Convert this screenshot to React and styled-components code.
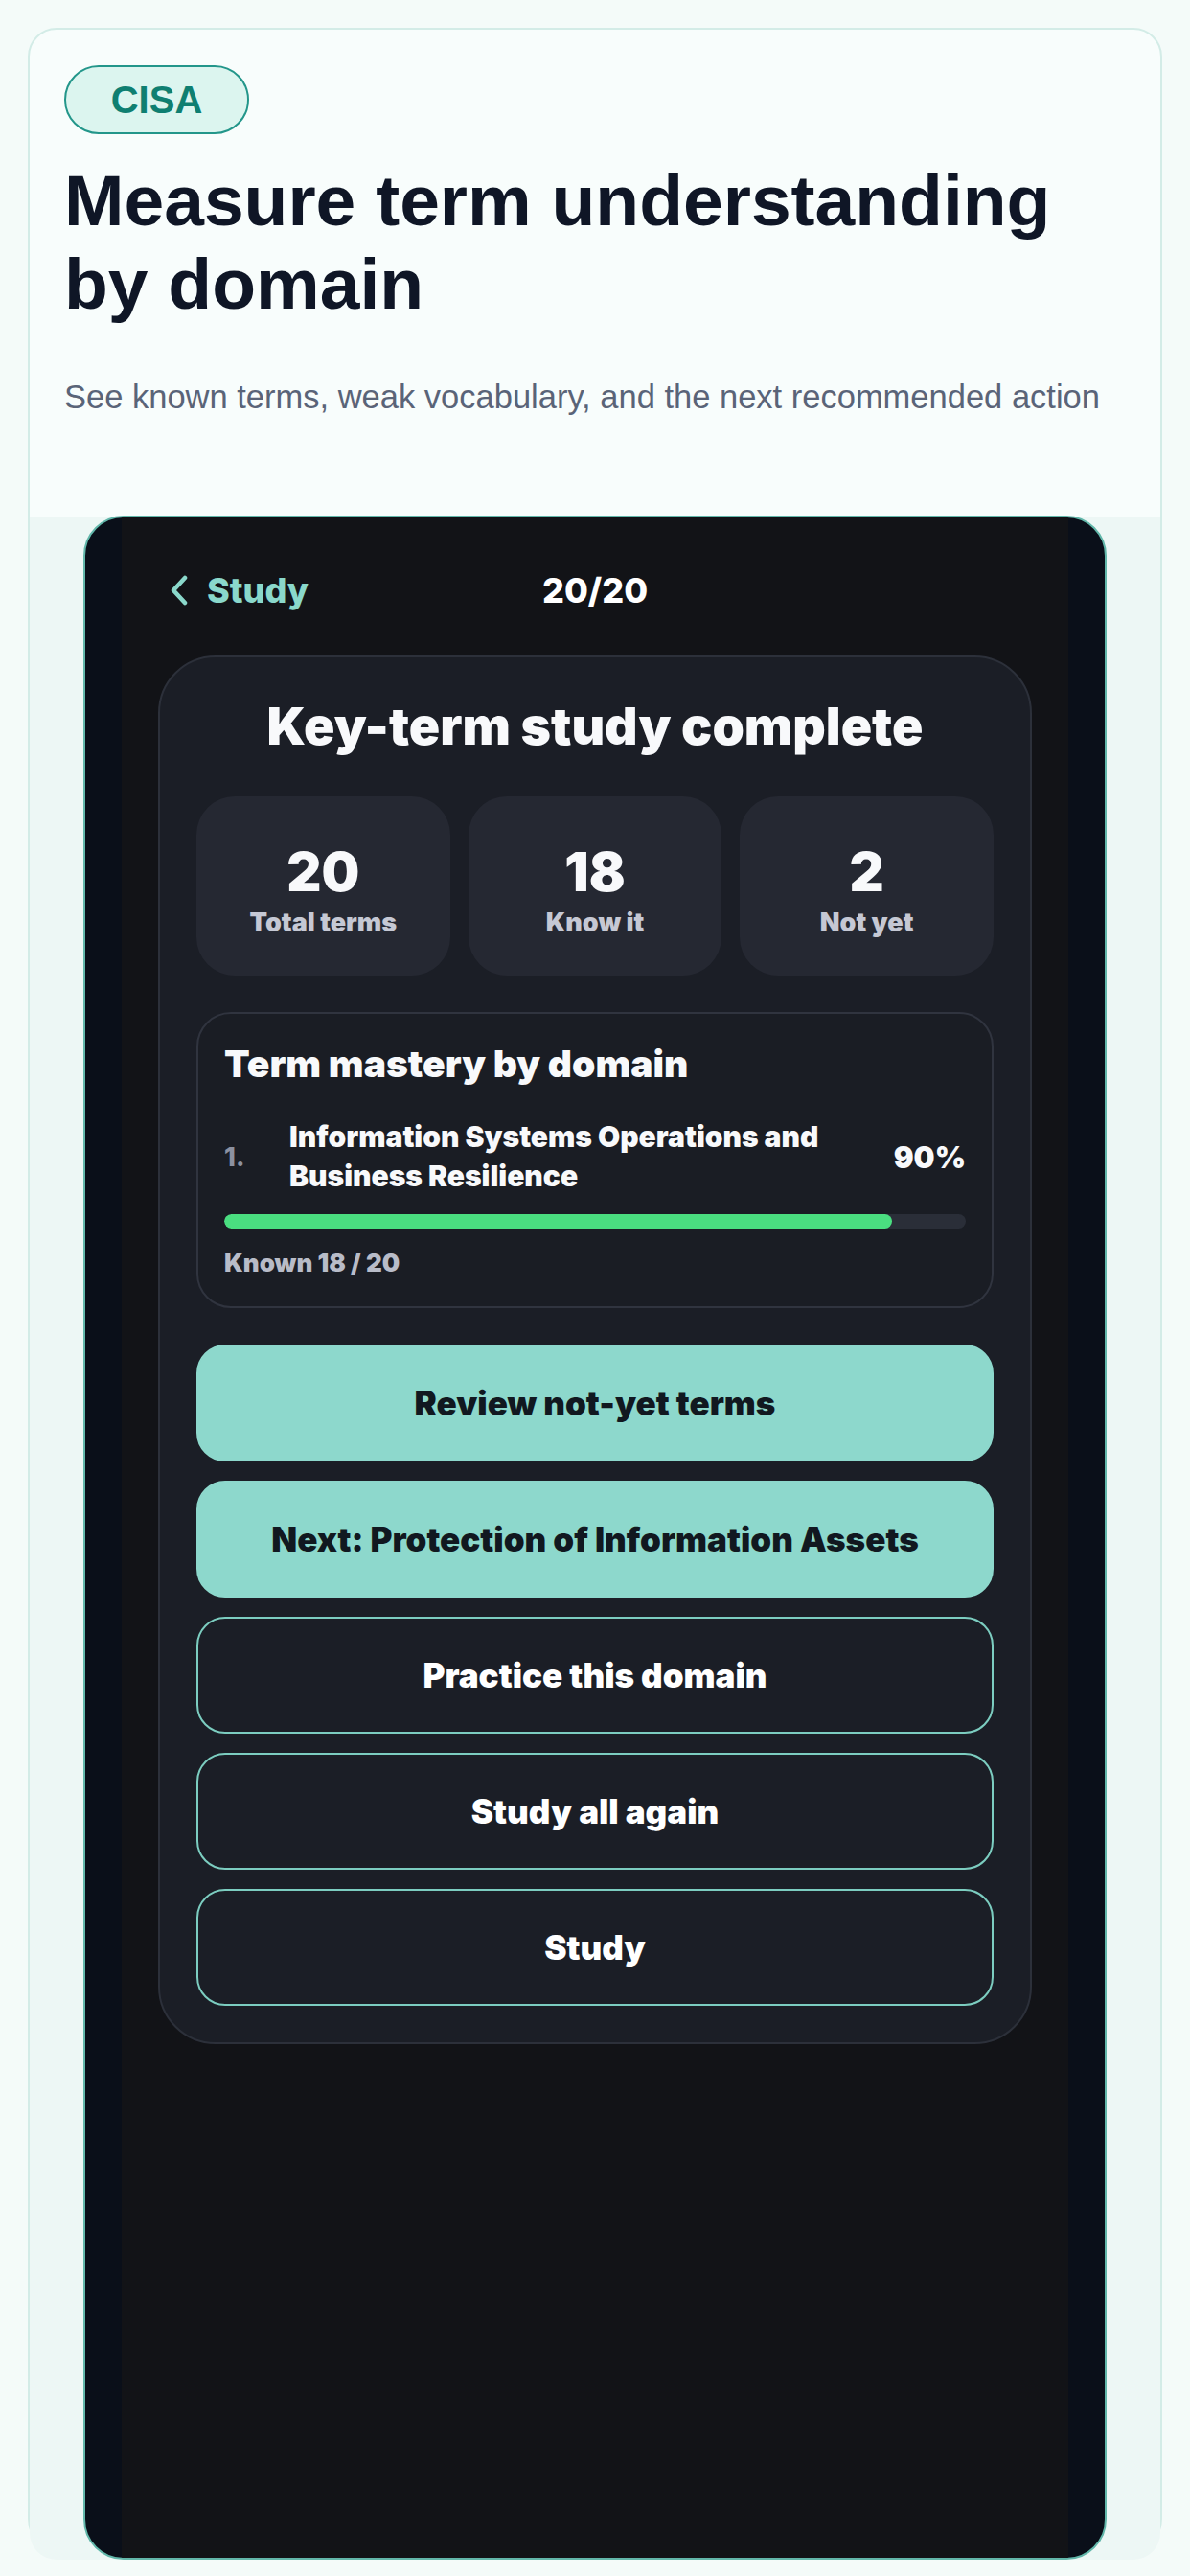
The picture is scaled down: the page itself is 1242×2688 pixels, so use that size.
import React from 'react';
import styled, { createGlobalStyle } from 'styled-components';

const GlobalStyle = createGlobalStyle`
  * {
    box-sizing: border-box;
  }

  body {
    margin: 0;
    background: #f4fbf9;
    font-family: 'Liberation Sans', Arial, sans-serif;
  }
`;

const stats = [
  { value: '20', label: 'Total terms' },
  { value: '18', label: 'Know it' },
  { value: '2', label: 'Not yet' },
];

const actions = [
  { label: 'Review not-yet terms', primary: true },
  { label: 'Next: Protection of Information Assets', primary: true },
  { label: 'Practice this domain' },
  { label: 'Study all again' },
  { label: 'Study' },
];

const App = () => {
  const known = 18;
  const total = 20;
  const percent = Math.round((known / total) * 100);

  return (
    <Page>
      <GlobalStyle />
      <Frame>
        <Intro>
          <Badge>CISA</Badge>
          <Headline>Measure term understanding by domain</Headline>
          <Lead>See known terms, weak vocabulary, and the next recommended action</Lead>
        </Intro>
        <Stage>
          <Phone>
            <Screen>
              <Nav>
                <Back>
                  <svg width="20" height="32" viewBox="0 0 20 32" fill="none">
                    <path
                      d="M16 3 L4 16 L16 29"
                      stroke="#8ad8cb"
                      strokeWidth="4.5"
                      strokeLinecap="round"
                      strokeLinejoin="round"
                    />
                  </svg>
                  Study
                </Back>
                <Counter>20/20</Counter>
                <span />
              </Nav>

              <Card>
                <CardTitle>Key-term study complete</CardTitle>
                <StatGrid>
                  {stats.map((s) => (
                    <Stat key={s.label}>
                      <StatValue>{s.value}</StatValue>
                      <StatLabel>{s.label}</StatLabel>
                    </Stat>
                  ))}
                </StatGrid>

                <Mastery>
                  <MasteryTitle>Term mastery by domain</MasteryTitle>
                  <DomainRow>
                    <DomainIndex>1.</DomainIndex>
                    <DomainName>Information Systems Operations and Business Resilience</DomainName>
                    <DomainPercent>{percent}%</DomainPercent>
                  </DomainRow>
                  <Track>
                    <Fill style={{ width: `${percent}%` }} />
                  </Track>
                  <KnownText>
                    Known {known} / {total}
                  </KnownText>
                </Mastery>

                <Actions>
                  {actions.map((a) => (
                    <ActionButton key={a.label} $primary={a.primary}>
                      {a.label}
                    </ActionButton>
                  ))}
                </Actions>
              </Card>
            </Screen>
          </Phone>
        </Stage>
      </Frame>
    </Page>
  );
};

const Page = styled.div`
  height: 2688px;
  padding: 29px;
  overflow: hidden;
`;

const Frame = styled.div`
  height: 2630px;
  display: flex;
  flex-direction: column;
  background: #f8fdfc;
  border: 2px solid #d3ece7;
  border-radius: 30px;
`;

const Intro = styled.div`
  padding: 37px 36px 100px;
`;

const Badge = styled.div`
  display: inline-flex;
  align-items: center;
  justify-content: center;
  width: 193px;
  height: 72px;
  border: 2px solid #23968a;
  border-radius: 36px;
  background: #dcf5ef;
  color: #0f7f71;
  font-size: 40px;
  font-weight: 700;
`;

const Headline = styled.h1`
  margin: 26px 0 48px;
  max-width: 1100px;
  color: #0f1626;
  font-size: 75px;
  line-height: 87px;
  font-weight: 700;
`;

const Lead = styled.p`
  margin: 0;
  color: #5a6478;
  font-size: 34.5px;
  line-height: 52px;
`;

const Stage = styled.div`
  flex: 1;
  padding: 0 56px;
  background: #edf7f5;
  border-radius: 0 0 28px 28px;
`;

const Phone = styled.div`
  margin-top: -2px;
  height: 2133px;
  padding: 0 38px;
  background: #0a0f19;
  border: 2.5px solid #62b7aa;
  border-radius: 42px;
  overflow: hidden;
`;

const Screen = styled.div`
  height: 100%;
  padding: 54px 38px 0;
  background: #121317;
  font-family: Inter, 'Noto Sans', sans-serif;
  color: #f8f9fb;
`;

const Nav = styled.div`
  display: grid;
  grid-template-columns: 1fr auto 1fr;
  align-items: center;
  height: 44px;
  margin: 0 12px 46px;
`;

const Back = styled.div`
  display: flex;
  align-items: center;
  gap: 19px;
  color: #8ad8cb;
  font-size: 36px;
  font-weight: 800;
`;

const Counter = styled.div`
  font-size: 36px;
  font-weight: 800;
  color: #ffffff;
`;

const Card = styled.div`
  padding: 42px 38px 38px;
  background: #1b1e26;
  border: 2px solid #2c303a;
  border-radius: 60px;
`;

const CardTitle = styled.h2`
  margin: 0 0 43px;
  text-align: center;
  font-size: 53.5px;
  line-height: 60px;
  font-weight: 900;
`;

const StatGrid = styled.div`
  display: grid;
  grid-template-columns: repeat(3, 1fr);
  gap: 19px;
`;

const Stat = styled.div`
  height: 187px;
  padding-top: 49px;
  display: flex;
  flex-direction: column;
  align-items: center;
  background: #252832;
  border-radius: 40px;
`;

const StatValue = styled.div`
  font-size: 56px;
  line-height: 60px;
  font-weight: 900;
`;

const StatLabel = styled.div`
  margin-top: 7px;
  color: #c5c8d4;
  font-size: 27px;
  line-height: 32px;
  font-weight: 900;
`;

const Mastery = styled.div`
  margin-top: 38px;
  padding: 29px 27px;
  background: #1a1d24;
  border: 2px solid #30343f;
  border-radius: 36px;
`;

const MasteryTitle = styled.h3`
  margin: 0 0 33px;
  font-size: 39px;
  line-height: 46px;
  font-weight: 900;
`;

const DomainRow = styled.div`
  display: grid;
  grid-template-columns: 38px 1fr auto;
  align-items: center;
  column-gap: 30px;
`;

const DomainIndex = styled.span`
  color: #8c91a0;
  font-size: 27px;
  font-weight: 800;
`;

const DomainName = styled.span`
  font-size: 30px;
  line-height: 41px;
  font-weight: 900;
`;

const DomainPercent = styled.span`
  font-size: 31px;
  font-weight: 900;
`;

const Track = styled.div`
  margin-top: 19px;
  height: 15px;
  background: #2a2e38;
  border-radius: 8px;
  overflow: hidden;
`;

const Fill = styled.div`
  height: 100%;
  background: #4ade80;
  border-radius: 8px;
`;

const KnownText = styled.div`
  margin-top: 20px;
  color: #b8bcc8;
  font-size: 26px;
  line-height: 32px;
  font-weight: 900;
`;

const Actions = styled.div`
  margin-top: 38px;
  display: flex;
  flex-direction: column;
  gap: 20px;
`;

const ActionButton = styled.button`
  height: 122px;
  border-radius: 30px;
  border: 2.5px solid ${(p) => (p.$primary ? '#8dd8cc' : '#7ccdc0')};
  background: ${(p) => (p.$primary ? '#8dd8cc' : 'transparent')};
  color: ${(p) => (p.$primary ? '#111820' : '#ffffff')};
  font-family: Inter, 'Noto Sans', sans-serif;
  font-size: 35px;
  font-weight: 900;
  cursor: pointer;
`;

export default App;
